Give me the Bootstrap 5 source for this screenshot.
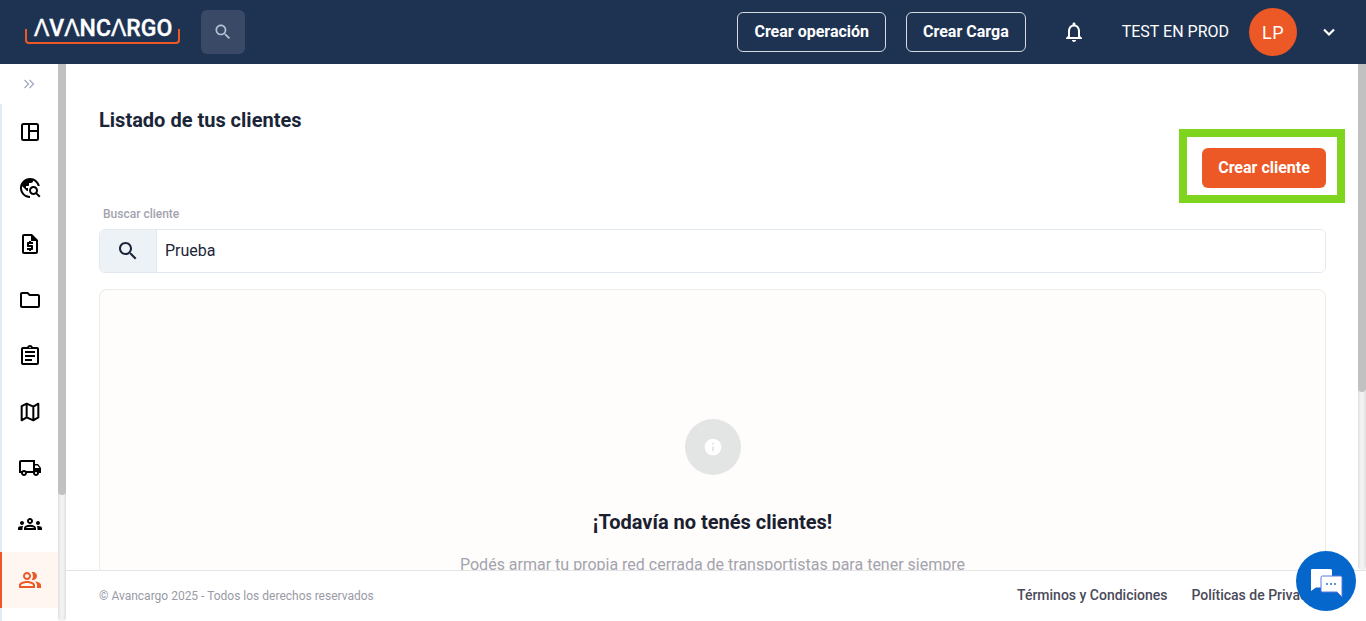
<!doctype html>
<html lang="es">
<head>
<meta charset="utf-8">
<title>Avancargo</title>
<link href="https://cdn.jsdelivr.net/npm/bootstrap@5.3.0/dist/css/bootstrap.min.css" rel="stylesheet">
<style>
html,body{height:100%;overflow:hidden}
body{font-family:Roboto,"Liberation Sans",sans-serif;color:#1a2030;background:#fff}
.shell{height:621px}
.workarea{min-height:0}
.contentcol{min-width:0}
.mainrow{height:506px;flex:none}
.topbar{height:64px;background:#1e3352;padding:0 29px 0 25px;flex:none}
.brand{position:relative;width:155px;height:44px;color:#fff;font-size:23px;font-weight:500;line-height:38px;padding-left:9px;white-space:nowrap;-webkit-text-stroke:.35px #fff}
.brand::after{content:"";position:absolute;left:0;right:0;top:19px;height:15px;border:2px solid #ec5826;border-top:0;border-radius:0 0 4px 4px}
.searchbtn{width:44px;height:44px;margin-left:21px;background:#394966;border-radius:6px;border:0;padding:0}
.navbtn{height:40px;font-size:16px;font-weight:700;color:#fff;border:1px solid #d5dae2;border-radius:6px;padding:0 16px;background:transparent}
.navbtn:hover{color:#fff}
.navbtn + .navbtn{margin-left:20px}
.bellicon{margin:0 36px}
.username{font-size:16px;color:#fff}
.avatar{width:48px;height:48px;margin-left:20px;background:#ec5826;color:#fff;font-size:18px;letter-spacing:.5px}
.sidebar{width:66px;flex:none;overflow:hidden;background:#fff}
.sidebody{width:58px;flex:none}
.toggler{height:40px}
.strip{border-left:2px solid #e3ebf5;height:517px}
.sideitem{height:56px;margin-left:-2px;border-left:2px solid transparent;color:#000}
.sideitem.on{border-left-color:#ec5826;background:#fff5f1;color:#ec5826}
.vbar{width:8px;flex:none;background:linear-gradient(90deg,#dedede,#f2f2f2 35%,#f2f2f2 65%,#dedede);border-radius:0 0 6px 6px}
.vthumb{background:#c1c1c1;border-radius:0 0 6px 6px}
.thumbside{height:431px}
.thumbmain{height:328px}
.mainpane{overflow:hidden;padding:0 32px 0 33px;min-width:0}
.pagehead{height:125px;padding-top:43px}
.pagetitle{font-size:20px;font-weight:700;line-height:26px;margin:0;color:#1a2538}
.actionbox{margin-top:-41px;height:40px}
.marker{position:absolute;left:-23px;top:-19px;width:166px;height:74px;border:8px solid #7fd41e;pointer-events:none}
.createbtn{width:124px;height:40px;background:#ec5826;border:0;border-radius:6px;color:#fff;font-size:16px;font-weight:700;padding:0}
.fieldlabel{font-size:12px;font-weight:500;color:#a3a3ae;padding-left:4px;line-height:16px;margin:18px 0 7px}
.searchgroup{height:44px;border:1px solid #e2e8f0;border-radius:6px;overflow:hidden}
.searchicon{width:57px;background:#edf2f7;border-right:1px solid #e2e8f0;color:#1a2538}
.searchinput{border:0;outline:0;flex:1;padding:0 8px;font-size:16px;color:#1a2538;background:#fff}
.emptycard{margin-top:16px;height:524px;background:#fefdfb;border:1px solid #ebebeb;border-radius:8px;padding-top:129px}
.emptyicon{width:56px;height:56px;background:#e3e5e5}
.emptytitle{font-size:20px;font-weight:700;line-height:26px;margin:34px 0 0;color:#1a2030}
.emptytext{font-size:16px;line-height:24px;color:#a3a3ae;margin:18px 0 0}
.pagefoot{height:51px;flex:none;border-top:1px solid #e2e4e6;padding:0 0 0 33px;background:#fff;overflow:hidden}
.copy{font-size:12px;color:#9a9aa6}
.footlink{font-size:14px;font-weight:500;color:#4a4a5a;text-decoration:none;white-space:nowrap}
.footlinks{gap:24px;margin-left:auto;margin-bottom:2px;width:349px;flex:none}
.chatbtn{position:absolute;left:1296px;top:551px;width:60px;height:60px;background:#0566cc;border:0;padding:0}
</style>
</head>
<body>
<div class="shell d-flex flex-column">
  <header class="topbar d-flex align-items-center">
    <a class="brand text-decoration-none d-block">ɅVɅNCɅRGO</a>
    <button class="searchbtn d-flex align-items-center justify-content-center" aria-label="Buscar">
      <svg width="20" height="20" viewBox="0 0 24 24" fill="#b4c0d3"><path d="M15.500 14h-.79l-.28-.27C15.410 12.590 16 11.110 16 9.500 16 5.910 13.090 3 9.500 3S3 5.910 3 9.500 5.910 16 9.500 16c1.610 0 3.090-.59 4.230-1.570l.27.28v.79l5 4.990L20.490 19l-4.990-5zm-6 0C7.010 14 5 11.990 5 9.500S7.010 5 9.500 5 14 7.010 14 9.500 11.990 14 9.500 14z"/></svg>
    </button>
    <div class="ms-auto d-flex align-items-center">
      <button class="btn navbtn">Crear operación</button>
      <button class="btn navbtn">Crear Carga</button>
      <svg class="bellicon" width="24" height="24" viewBox="0 0 24 24" fill="#fff"><path d="M12 22c1.100 0 2-.9 2-2h-4c0 1.100.9 2 2 2zm6-6v-5c0-3.070-1.630-5.640-4.500-6.320V4c0-.83-.67-1.500-1.500-1.500s-1.500.67-1.500 1.500v.68C7.640 5.360 6 7.920 6 11v5l-2 2v1h16v-1l-2-2zm-2 1H8v-6c0-2.480 1.510-4.500 4-4.500s4 2.020 4 4.500v6z"/></svg>
      <span class="username">TEST EN PROD</span>
      <span class="avatar rounded-circle d-flex align-items-center justify-content-center">LP</span>
      <svg class="ms-4" width="16" height="16" viewBox="0 0 16 16" fill="none" stroke="#fff" stroke-width="2.2"><path d="M3 5.500l5 5 5-5"/></svg>
    </div>
  </header>
  <div class="workarea d-flex flex-grow-1">
    <aside class="sidebar d-flex">
      <div class="sidebody">
        <div class="toggler d-flex align-items-center justify-content-center">
          <svg width="12" height="12" viewBox="0 0 12 12" fill="none" stroke="#a5a8c0" stroke-width="1.3"><path d="M1.500 2l4 4-4 4M6.500 2l4 4-4 4"/></svg>
        </div>
        <div class="strip">
          <div class="sideitem d-flex align-items-center justify-content-center">
            <svg width="20" height="20" viewBox="0 0 20 20" fill="none" stroke="currentColor" stroke-width="2"><rect x="2" y="2" width="16" height="16" rx="1.500"/><path d="M9 2v16M9 9h9"/></svg>
          </div>
          <div class="sideitem d-flex align-items-center justify-content-center">
            <svg width="24" height="24" viewBox="0 0 24 24" fill="currentColor"><path d="M19.300 16.900c.4-.7.7-1.500.7-2.400 0-2.500-2-4.500-4.500-4.500S11 12 11 14.500s2 4.500 4.500 4.500c.9 0 1.700-.3 2.400-.7l3.200 3.200 1.400-1.400-3.200-3.200zm-3.800.1c-1.400 0-2.500-1.100-2.500-2.500s1.100-2.500 2.500-2.500 2.500 1.100 2.500 2.500-1.100 2.500-2.500 2.500zM12 20v2C6.480 22 2 17.520 2 12S6.480 2 12 2c4.840 0 8.870 3.440 9.800 8h-2.070c-.64-2.460-2.400-4.470-4.730-5.410V5c0 1.100-.9 2-2 2h-2v2c0 .55-.45 1-1 1H8v2h2v3H9l-4.790-4.790C4.080 10.790 4 11.380 4 12c0 4.410 3.590 8 8 8z"/></svg>
          </div>
          <div class="sideitem d-flex align-items-center justify-content-center">
            <svg width="24" height="24" viewBox="0 0 24 24" fill="currentColor"><path d="M14 2H6c-1.100 0-2 .9-2 2v16c0 1.100.89 2 1.990 2H18c1.100 0 2-.9 2-2V8l-6-6zM6 20V4h7v5h5v11H6zm5-1h2v-1h1c.55 0 1-.45 1-1v-3c0-.55-.45-1-1-1h-3v-1h4v-2h-2V9h-2v1h-1c-.55 0-1 .45-1 1v3c0 .55.45 1 1 1h3v1H9v2h2v1z"/></svg>
          </div>
          <div class="sideitem d-flex align-items-center justify-content-center">
            <svg width="24" height="24" viewBox="0 0 24 24" fill="currentColor"><path d="M9.170 6l2 2H20v10H4V6h5.170M10 4H4c-1.100 0-1.990.9-1.990 2L2 18c0 1.100.9 2 2 2h16c1.100 0 2-.9 2-2V8c0-1.100-.9-2-2-2h-8l-2-2z"/></svg>
          </div>
          <div class="sideitem d-flex align-items-center justify-content-center">
            <svg width="24" height="24" viewBox="0 0 24 24" fill="currentColor"><path d="M7 15h7v2H7zm0-4h10v2H7zm0-4h10v2H7zm12-4h-4.180C14.400 1.840 13.300 1 12 1c-1.300 0-2.400.84-2.820 2H5c-.14 0-.27.01-.4.04-.39.08-.74.28-1.010.55-.18.18-.33.4-.43.64-.1.23-.16.49-.16.77v14c0 .27.06.54.16.78s.25.45.43.64c.27.27.62.47 1.010.55.13.02.26.03.4.03h14c1.100 0 2-.9 2-2V5c0-1.100-.9-2-2-2zm-7-.25c.41 0 .75.34.75.75s-.34.75-.75.75-.75-.34-.75-.75.34-.75.75-.75zM19 19H5V5h14v14z"/></svg>
          </div>
          <div class="sideitem d-flex align-items-center justify-content-center">
            <svg width="20" height="20" viewBox="0 0 24 24" fill="none" stroke="currentColor" stroke-width="2.400" stroke-linejoin="round"><path d="M2 5v17l6-3.500 8 3.500 6-3.500V2l-6 3.500L8 2zM8 2v16.500M16 5.500V22"/></svg>
          </div>
          <div class="sideitem d-flex align-items-center justify-content-center">
            <svg width="24" height="24" viewBox="0 0 24 24" fill="currentColor"><path d="M20 8h-3V4H3c-1.100 0-2 .9-2 2v11h2c0 1.660 1.340 3 3 3s3-1.340 3-3h6c0 1.660 1.340 3 3 3s3-1.340 3-3h2v-5l-3-4zm-.5 1.500l1.960 2.500H17V9.500h2.500zM6 18c-.55 0-1-.45-1-1s.45-1 1-1 1 .45 1 1-.45 1-1 1zm2.220-3c-.55-.61-1.330-1-2.220-1s-1.670.39-2.220 1H3V6h12v9H8.220zM18 18c-.55 0-1-.45-1-1s.45-1 1-1 1 .45 1 1-.45 1-1 1z"/></svg>
          </div>
          <div class="sideitem d-flex align-items-center justify-content-center">
            <svg width="24" height="24" viewBox="0 0 24 24" fill="currentColor"><path d="M4 13c1.100 0 2-.9 2-2s-.9-2-2-2-2 .9-2 2 .9 2 2 2zm1.130 1.100c-.37-.06-.74-.1-1.130-.1-.99 0-1.930.21-2.780.58C.48 14.900 0 15.620 0 16.430V18h4.500v-1.610c0-.83.23-1.610.63-2.290zM20 13c1.100 0 2-.9 2-2s-.9-2-2-2-2 .9-2 2 .9 2 2 2zm4 3.430c0-.81-.48-1.530-1.220-1.850-.85-.37-1.790-.58-2.780-.58-.39 0-.76.04-1.130.1.4.68.63 1.460.63 2.290V18H24v-1.570zm-7.760-2.780c-1.170-.52-2.610-.9-4.240-.9-1.630 0-3.070.39-4.240.9C6.680 14.130 6 15.210 6 16.390V18h12v-1.610c0-1.180-.68-2.260-1.760-2.740zM8.070 16c.09-.23.13-.39.91-.69.97-.38 1.990-.56 3.020-.56s2.050.18 3.020.56c.77.3.81.46.91.69H8.070zM12 8c.55 0 1 .45 1 1s-.45 1-1 1-1-.45-1-1 .45-1 1-1m0-2c-1.660 0-3 1.340-3 3s1.340 3 3 3 3-1.340 3-3-1.340-3-3-3z"/></svg>
          </div>
          <div class="sideitem on d-flex align-items-center justify-content-center">
            <svg width="24" height="24" viewBox="0 0 24 24" fill="currentColor"><path d="M16.670 13.130C18.040 14.060 19 15.320 19 17v3h4v-3c0-2.180-3.570-3.470-6.330-3.870z"/><path d="M15 12c2.210 0 4-1.790 4-4s-1.790-4-4-4c-.47 0-.91.1-1.330.24C14.500 5.270 15 6.580 15 8s-.5 2.730-1.330 3.760c.42.14.86.24 1.330.24z"/><path d="M9 12c2.210 0 4-1.790 4-4s-1.790-4-4-4-4 1.790-4 4 1.790 4 4 4zm0-6c1.100 0 2 .9 2 2s-.9 2-2 2-2-.9-2-2 .9-2 2-2z"/><path d="M9 13c-2.670 0-8 1.340-8 4v3h16v-3c0-2.660-5.330-4-8-4zm6 5H3v-.99C3.200 16.290 6.300 15 9 15s5.800 1.290 6 2v1z"/></svg>
          </div>
        </div>
      </div>
      <div class="vbar"><div class="vthumb thumbside"></div></div>
    </aside>
    <div class="contentcol d-flex flex-column flex-grow-1">
      <div class="mainrow d-flex">
        <main class="mainpane flex-grow-1">
          <div class="pagehead">
            <h1 class="pagetitle">Listado de tus clientes</h1>
          </div>
          <div class="actionbox d-flex justify-content-end">
            <div class="position-relative">
              <button class="createbtn">Crear cliente</button>
              <span class="marker"></span>
            </div>
          </div>
          <div class="fieldlabel">Buscar cliente</div>
          <div class="searchgroup d-flex">
            <span class="searchicon d-flex align-items-center justify-content-center">
              <svg width="24" height="24" viewBox="0 0 24 24" fill="currentColor"><path d="M15.500 14h-.79l-.28-.27C15.410 12.590 16 11.110 16 9.500 16 5.910 13.090 3 9.500 3S3 5.910 3 9.500 5.910 16 9.500 16c1.610 0 3.090-.59 4.230-1.570l.27.28v.79l5 4.990L20.490 19l-4.990-5zm-6 0C7.010 14 5 11.990 5 9.500S7.010 5 9.500 5 14 7.010 14 9.500 11.990 14 9.500 14z"/></svg>
            </span>
            <input class="searchinput" value="Prueba" aria-label="Buscar cliente">
          </div>
          <section class="emptycard text-center">
            <div class="emptyicon rounded-circle d-flex align-items-center justify-content-center mx-auto">
              <svg width="20" height="20" viewBox="0 0 24 24" fill="#fff"><path d="M12 2C6.480 2 2 6.480 2 12s4.480 10 10 10 10-4.480 10-10S17.520 2 12 2zm1 15h-2v-6h2v6zm0-8h-2V7h2v2z"/></svg>
            </div>
            <h2 class="emptytitle">¡Todavía no tenés clientes!</h2>
            <p class="emptytext">Podés armar tu propia red cerrada de transportistas para tener siempre</p>
          </section>
        </main>
        <div class="vbar"><div class="vthumb thumbmain"></div></div>
      </div>
      <footer class="pagefoot d-flex align-items-center">
        <span class="copy">© Avancargo 2025 - Todos los derechos reservados</span>
        <div class="footlinks d-flex">
          <a class="footlink" href="#">Términos y Condiciones</a>
          <a class="footlink" href="#">Políticas de Privacidad</a>
        </div>
      </footer>
    </div>
  </div>
</div>
<button class="chatbtn rounded-circle d-flex align-items-center justify-content-center" aria-label="Chat">
  <svg width="34" height="32" viewBox="0 0 34 32">
    <path d="M3 4h18.500a1.500 1.500 0 0 1 1.500 1.500V21a1.500 1.500 0 0 1-1.500 1.500H7L2 26V5a1 1 0 0 1 1-1z" fill="#fff"/>
    <path d="M13.500 11h18a1.500 1.500 0 0 1 1.500 1.500V32l-5-5H13.500a1.500 1.500 0 0 1-1.500-1.500v-13A1.500 1.500 0 0 1 13.500 11z" fill="#fff" stroke="#5a78e0" stroke-width="1"/>
    <circle cx="18" cy="19" r=".9" fill="#0566cc"/><circle cx="22" cy="19" r=".9" fill="#0566cc"/><circle cx="26" cy="19" r=".9" fill="#0566cc"/>
  </svg>
</button>
<script src="https://cdn.jsdelivr.net/npm/bootstrap@5.3.0/dist/js/bootstrap.bundle.min.js"></script>
</body>
</html>
